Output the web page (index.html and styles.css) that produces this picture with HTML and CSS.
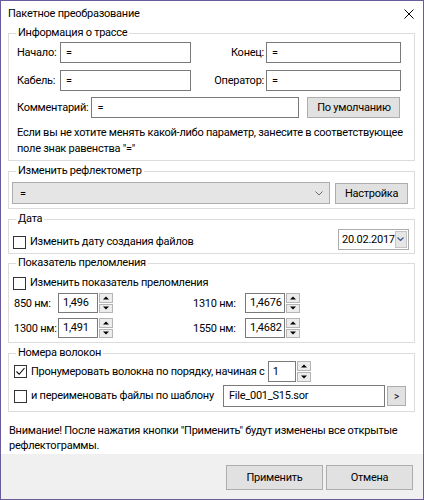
FILE: index.html
```html
<!DOCTYPE html>
<html lang="ru">
<head>
<meta charset="utf-8">
<link rel="stylesheet" href="styles.css">
</head>
<body>
<div class="window">
  <div class="titlebar">
    <span class="title">Пакетное преобразование</span>
    <svg class="close" width="10" height="10" viewBox="0 0 10 10"><path d="M0.5 0.5 L9.5 9.5 M9.5 0.5 L0.5 9.5" stroke="#000" stroke-width="1"/></svg>
  </div>
  <div class="content">
    <div class="group g-info">
      <span class="legend">Информация о трассе</span>
      <div class="row r1">
        <span class="lbl lbl-left">Начало:</span>
        <div class="input in-left">=</div>
        <span class="lbl lbl-right">Конец:</span>
        <div class="input in-right">=</div>
      </div>
      <div class="row r2">
        <span class="lbl lbl-left">Кабель:</span>
        <div class="input in-left">=</div>
        <span class="lbl lbl-right">Оператор:</span>
        <div class="input in-right">=</div>
      </div>
      <div class="row r3">
        <span class="lbl">Комментарий:</span>
        <div class="input in-comment">=</div>
        <div class="btn btn-default">По умолчанию</div>
      </div>
      <p class="hint">Если вы не хотите менять какой-либо параметр, занесите в соответствующее<br>поле знак равенства "="</p>
    </div>

    <div class="group g-refl">
      <span class="legend">Изменить рефлектометр</span>
      <div class="row">
        <div class="combo"><span>=</span>
          <svg class="chev" width="8" height="5" viewBox="0 0 8 5"><polyline points="0.5,0.5 4,4 7.5,0.5" fill="none" stroke="#6d6d6d" stroke-width="1"/></svg>
        </div>
        <div class="btn btn-setup">Настройка</div>
      </div>
    </div>

    <div class="group g-date">
      <span class="legend">Дата</span>
      <div class="row">
        <label class="check"><span class="box"></span>Изменить дату создания файлов</label>
        <div class="date"><span>20.02.2017</span>
          <span class="date-btn"><svg width="7" height="4" viewBox="0 0 7 4"><polyline points="0.5,0.5 3.5,3.5 6.5,0.5" fill="none" stroke="#3c5a8a" stroke-width="1.2"/></svg></span>
        </div>
      </div>
    </div>

    <div class="group g-ior">
      <span class="legend">Показатель преломления</span>
      <label class="check"><span class="box"></span>Изменить показатель преломления</label>
      <div class="ior-grid">
        <span class="nm">850 нм:</span>
        <div class="spin"><div class="input spin-in">1,496</div><div class="spin-btns"><span class="sb up"></span><span class="sb down"></span></div></div>
        <span class="nm nm-r">1310 нм:</span>
        <div class="spin"><div class="input spin-in">1,4676</div><div class="spin-btns"><span class="sb up"></span><span class="sb down"></span></div></div>
        <span class="nm">1300 нм:</span>
        <div class="spin"><div class="input spin-in">1,491</div><div class="spin-btns"><span class="sb up"></span><span class="sb down"></span></div></div>
        <span class="nm nm-r">1550 нм:</span>
        <div class="spin"><div class="input spin-in">1,4682</div><div class="spin-btns"><span class="sb up"></span><span class="sb down"></span></div></div>
      </div>
    </div>

    <div class="group g-fibers">
      <span class="legend">Номера волокон</span>
      <div class="row f1">
        <label class="check"><span class="box checked"><svg width="11" height="11" viewBox="0 0 11 11"><polyline points="1.5,5.5 4.2,8.3 9.5,2" fill="none" stroke="#000" stroke-width="1.1"/></svg></span>Пронумеровать волокна по порядку, начиная с</label>
        <div class="spin spin-num"><div class="input spin-in">1</div><div class="spin-btns"><span class="sb up"></span><span class="sb down"></span></div></div>
      </div>
      <div class="row f2">
        <label class="check"><span class="box"></span>и переименовать файлы по шаблону</label>
        <div class="input in-template">File_001_S15.sor</div>
        <div class="btn btn-arrow">&gt;</div>
      </div>
    </div>

    <p class="warning">Внимание! После нажатия кнопки "Применить" будут изменены все открытые<br>рефлектограммы.</p>
  </div>
  <div class="footer">
    <div class="btn btn-footer btn-apply">Применить</div>
    <div class="btn btn-footer btn-cancel">Отмена</div>
  </div>
</div>
</body>
</html>
```

FILE: styles.css
```css
* { box-sizing: border-box; }
html, body { margin: 0; padding: 0; background: #fff; }
body {
  font-family: Roboto, "Noto Sans", sans-serif;
  font-size: 11px;
  letter-spacing: -0.25px;
  color: #000;
}
.window {
  width: 424px;
  height: 500px;
  border: 1px solid #6a5b9c;
  background: #fff;
  display: flex;
  flex-direction: column;
}
.titlebar {
  height: 24px;
  display: flex;
  align-items: center;
  justify-content: space-between;
  padding: 0 9px 0 7px;
}
.close { margin-top: 2px; }
.content {
  flex: 1;
  padding: 8px 8px 0 7px;
}
.group {
  position: relative;
  border: 1px solid #dcdcdc;
}
.legend {
  position: absolute;
  top: -9px;
  left: 7px;
  background: #fff;
  padding: 0 2px 0 2px;
  line-height: 16px;
}
.row { display: flex; align-items: center; }
.input {
  height: 21px;
  border: 1px solid #7a7a7a;
  background: #fff;
  padding: 0 5px;
  line-height: 19px;
  white-space: nowrap;
  overflow: hidden;
}
.btn {
  background: #e1e1e1;
  border: 1px solid #adadad;
  display: flex;
  align-items: center;
  justify-content: center;
}

/* group 1 */
.g-info { padding: 8px 13px 3px 8px; }
.r1, .r2, .r3 { height: 21px; }
.r2 { margin-top: 7px; }
.r3 { margin-top: 6px; }
.lbl-left { width: 43px; }
.in-left { width: 131px; }
.lbl-right { flex: 1; text-align: right; padding-right: 2px; }
.in-right { width: 135px; }
.in-comment { width: 208px; margin-left: 3px; }
.btn-default { width: 93px; height: 21px; margin-left: 8px; }
.hint { margin: 7px 0 0 0; line-height: 16px; white-space: nowrap; }

/* group 2 */
.g-refl { margin-top: 10px; padding: 10px 6px 4px 3px; }
.combo {
  width: 319px;
  height: 22px;
  background: #e5e5e5;
  border: 1px solid #adadad;
  display: flex;
  align-items: center;
  justify-content: space-between;
  padding: 0 6px 0 7px;
}
.chev { margin-top: 1px; }
.btn-setup { width: 73px; height: 21px; margin-left: 5px; }

/* group 3 */
.g-date { margin-top: 10px; padding: 8px 5px 3px 4px; }
.g-date .row { justify-content: space-between; }
.check { display: flex; align-items: center; line-height: 16px; white-space: nowrap; }
.box {
  width: 13px; height: 13px;
  border: 1px solid #333;
  background: #fff;
  margin-right: 4px;
  display: inline-flex;
  align-items: center;
  justify-content: center;
}
.g-date .check { margin-top: 6px; }
.date {
  width: 71px; height: 21px;
  border: 1px solid #acacac;
  display: flex;
  align-items: center;
  justify-content: space-between;
  padding: 0 1px 0 3px;
}
.date-btn {
  width: 13px; height: 17px;
  background: #e6e6e6;
  border: 1px solid #c4c4c4;
  display: flex;
  align-items: center;
  justify-content: center;
}

/* group 4 */
.g-ior { margin-top: 9px; padding: 11px 8px 4px 4px; }
.ior-grid {
  display: grid;
  grid-template-columns: 44px 135px 52px auto;
  row-gap: 5px;
  align-items: center;
  margin-top: 2px;
  margin-left: 1px;
}
.nm { white-space: nowrap; }
.spin { display: flex; height: 20px; }
.spin-in { width: 40px; height: 20px; line-height: 18px; padding: 0 4px; }
.spin-btns {
  width: 14px;
  margin-left: 1px;
  display: flex;
  flex-direction: column;
  gap: 1px;
}
.sb {
  flex: 1;
  background: #ececec;
  border: 1px solid #b5b5b5;
  position: relative;
}
.sb::after {
  content: "";
  position: absolute;
  left: 50%;
  top: 50%;
  transform: translate(-50%, -50%);
  width: 0; height: 0;
  border-left: 3px solid transparent;
  border-right: 3px solid transparent;
}
.sb.up::after { border-bottom: 3px solid #000; }
.sb.down::after { border-top: 3px solid #000; }

/* group 5 */
.g-fibers { margin-top: 10px; padding: 7px 8px 4px 5px; }
.f1 { height: 21px; }
.spin-num { height: 21px; margin-left: 3px; }
.spin-num .spin-in { width: 28px; height: 21px; line-height: 19px; }
.spin-num .spin-btns { width: 14px; }
.f2 { margin-top: 3px; height: 22px; }
.in-template { width: 162px; height: 22px; line-height: 20px; margin-left: auto; }
.btn-arrow { width: 19px; height: 20px; margin-left: 2px; font-size: 10px; }

.warning { margin: 11px 0 0 1px; line-height: 15px; }

.footer {
  height: 45px;
  background: #f0f0f0;
  display: flex;
  justify-content: flex-end;
  padding: 11px 10px 0 0;
  gap: 3px;
}
.btn-footer { height: 25px; }
.btn-apply { width: 97px; }
.btn-cancel { width: 87px; }
```
